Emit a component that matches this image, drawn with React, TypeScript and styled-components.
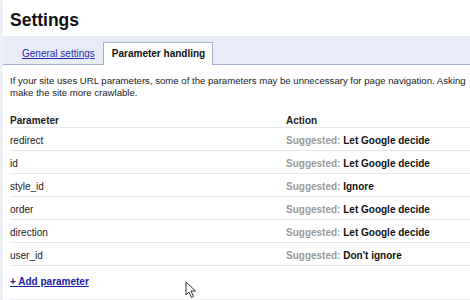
import React from 'react'
import styled, { createGlobalStyle } from 'styled-components'

const GlobalStyle = createGlobalStyle`
html, body {
  margin: 0;
  padding: 0;
  background: #ffffff;
}
body {
  font-family: "Liberation Sans", Arial, sans-serif;
  color: #222222;
}
`

type Param = {
  name: string,
  action: string,
}

const params: Param[] = [
  { name: 'redirect', action: 'Let Google decide' },
  { name: 'id', action: 'Let Google decide' },
  { name: 'style_id', action: 'Ignore' },
  { name: 'order', action: 'Let Google decide' },
  { name: 'direction', action: 'Let Google decide' },
  { name: 'user_id', action: "Don't ignore" },
]

const Page = styled.div`
position: relative;
width: 470px;
height: 300px;
overflow: hidden;
box-sizing: border-box;
border-left: 3px solid #eef0f8;
`

const Title = styled.h1`
margin: 0;
padding: 10px 0 0 7px;
height: 28px;
box-sizing: border-box;
font-size: 17.5px;
line-height: 20px;
font-weight: bold;
color: #111111;
`

const TabBar = styled.div`
margin-top: 8px;
height: 29px;
box-sizing: border-box;
display: flex;
align-items: flex-end;
padding-left: 10px;
background: #e8ecf8;
border-bottom: 1px solid #a3b2cb;
`

const Tab = styled.a<{ $active?: boolean }>`
display: block;
height: ${p => (p.$active ? '23px' : '22px')};
box-sizing: border-box;
padding: 5px 7px 0 8px;
margin-bottom: ${p => (p.$active ? '-1px' : '0')};
font-size: 10px;
line-height: 12px;
cursor: pointer;
background: ${p => (p.$active ? '#ffffff' : 'transparent')};
border: ${p => (p.$active ? '1px solid #a3b2cb' : '1px solid transparent')};
border-bottom: none;
font-weight: ${p => (p.$active ? 'bold' : 'normal')};
color: ${p => (p.$active ? '#111111' : '#2a2aa8')};
text-decoration: ${p => (p.$active ? 'none' : 'underline')};
`

const Content = styled.div`
padding: 10px 0 0 7px;
`

const Intro = styled.p`
margin: 0;
font-size: 9.6px;
line-height: 12px;
white-space: nowrap;
color: #222222;
`

const Table = styled.div`
margin-top: 9px;
`

const Row = styled.div<{ $head?: boolean }>`
display: grid;
grid-template-columns: 276px 1fr;
box-sizing: border-box;
height: ${p => (p.$head ? '20px' : '23px')};
padding-top: 7px;
border-bottom: 1px solid #e6e8ec;
font-size: 10px;
line-height: 12px;
font-weight: ${p => (p.$head ? 'bold' : 'normal')};
color: #222222;
`

const Action = styled.span`
font-weight: bold;
color: #111111;
`

const Hint = styled.span`
color: #9a9a9a;
`

const AddLink = styled.a`
display: inline-block;
margin-top: 10px;
font-size: 10px;
line-height: 12px;
font-weight: bold;
color: #20209e;
text-decoration: underline;
cursor: pointer;
`

const Footer = styled.div`
margin-top: 10px;
height: 6px;
background: #eceef9;
`

const Cursor = styled.svg`
position: absolute;
left: 182px;
top: 281px;
`

export default function App() {
  return <>
    <GlobalStyle />
    <Page>
      <Title>Settings</Title>
      <TabBar>
        <Tab>General settings</Tab>
        <Tab $active>Parameter handling</Tab>
      </TabBar>
      <Content>
        <Intro>If your site uses URL parameters, some of the parameters may be unnecessary for page navigation. Asking</Intro>
        <Intro>make the site more crawlable.</Intro>
        <Table>
          <Row $head>
            <span>Parameter</span>
            <span>Action</span>
          </Row>
          {params.map(p => (
            <Row key={p.name}>
              <span>{p.name}</span>
              <Action><Hint>Suggested:</Hint> {p.action}</Action>
            </Row>
          ))}
        </Table>
        <AddLink>+ Add parameter</AddLink>
        <Footer />
      </Content>
      <Cursor width="12" height="18" viewBox="0 0 12 18">
        <path d="M1 1 L1 14 L4 11 L6.5 16.5 L8.5 15.5 L6 10 L10.5 10 Z" fill="#ffffff" stroke="#333333" strokeWidth="1" strokeLinejoin="round" />
      </Cursor>
    </Page>
  </>
}
